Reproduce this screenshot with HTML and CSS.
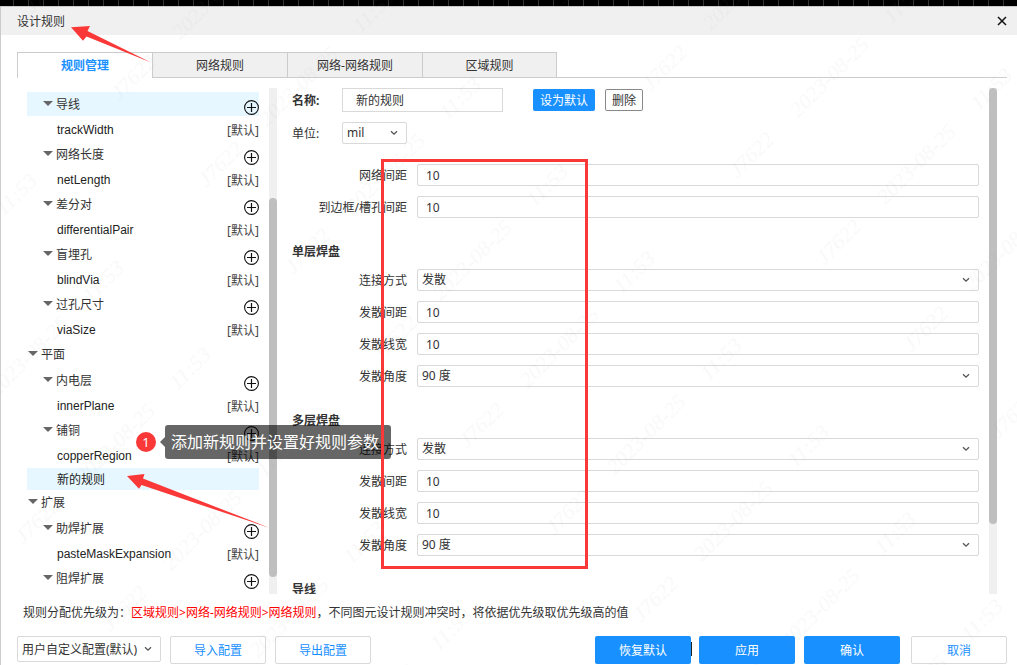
FILE: index.html
```html
<!DOCTYPE html>
<html lang="zh-CN">
<head>
<meta charset="utf-8">
<title>设计规则</title>
<link rel="stylesheet" href="styles.css">
</head>
<body>
<div class="canvas-strip"></div>
<main class="dialog">
  <header class="titlebar">
    <h1 class="title">设计规则</h1>
    <button class="close" type="button" aria-label="关闭"><svg width="10" height="10" viewBox="0 0 10 10"><path d="M1 1l8 8M9 1l-8 8" stroke="#111" stroke-width="1.5" fill="none"/></svg></button>
  </header>
  <nav class="tabs">
    <button class="tab active" type="button">规则管理</button>
    <button class="tab" type="button">网络规则</button>
    <button class="tab" type="button">网络-网络规则</button>
    <button class="tab" type="button">区域规则</button>
  </nav>
  <svg class="defs" width="0" height="0" aria-hidden="true">
    <symbol id="plus" viewBox="0 0 15 15"><circle cx="7.5" cy="7.5" r="6.9" fill="none" stroke="#111" stroke-width="1.1"/><path d="M7.500 3v9M3 7.500h9" stroke="#111" stroke-width="1.2"/></symbol>
  </svg>
  <div class="body">
    <ul class="tree">
      <li class="node group selected"><span class="name">导线</span><button class="add" type="button" aria-label="添加"><svg><use href="#plus"/></svg></button></li>
      <li class="node leaf"><span class="name">trackWidth</span><span class="default">[默认]</span></li>
      <li class="node group"><span class="name">网络长度</span><button class="add" type="button" aria-label="添加"><svg><use href="#plus"/></svg></button></li>
      <li class="node leaf"><span class="name">netLength</span><span class="default">[默认]</span></li>
      <li class="node group"><span class="name">差分对</span><button class="add" type="button" aria-label="添加"><svg><use href="#plus"/></svg></button></li>
      <li class="node leaf"><span class="name">differentialPair</span><span class="default">[默认]</span></li>
      <li class="node group"><span class="name">盲埋孔</span><button class="add" type="button" aria-label="添加"><svg><use href="#plus"/></svg></button></li>
      <li class="node leaf"><span class="name">blindVia</span><span class="default">[默认]</span></li>
      <li class="node group"><span class="name">过孔尺寸</span><button class="add" type="button" aria-label="添加"><svg><use href="#plus"/></svg></button></li>
      <li class="node leaf"><span class="name">viaSize</span><span class="default">[默认]</span></li>
      <li class="node root"><span class="name">平面</span></li>
      <li class="node group"><span class="name">内电层</span><button class="add" type="button" aria-label="添加"><svg><use href="#plus"/></svg></button></li>
      <li class="node leaf"><span class="name">innerPlane</span><span class="default">[默认]</span></li>
      <li class="node group"><span class="name">铺铜</span><button class="add" type="button" aria-label="添加"><svg><use href="#plus"/></svg></button></li>
      <li class="node leaf"><span class="name">copperRegion</span><span class="default">[默认]</span></li>
      <li class="node leaf custom selected"><span class="name">新的规则</span></li>
      <li class="node root"><span class="name">扩展</span></li>
      <li class="node group"><span class="name">助焊扩展</span><button class="add" type="button" aria-label="添加"><svg><use href="#plus"/></svg></button></li>
      <li class="node leaf"><span class="name">pasteMaskExpansion</span><span class="default">[默认]</span></li>
      <li class="node group"><span class="name">阻焊扩展</span><button class="add" type="button" aria-label="添加"><svg><use href="#plus"/></svg></button></li>
    </ul>
    <div class="scrollbar tree-scroll"><div class="thumb"></div></div>
    <form class="form">
      <div class="row">
        <label class="key strong" for="name">名称:</label>
        <input class="field name-field" id="name" value="新的规则">
        <button class="small primary" type="button">设为默认</button>
        <button class="small plain" type="button">删除</button>
      </div>
      <div class="row unit-row">
        <label class="key" for="unit">单位:</label>
        <span class="select unit"><select id="unit"><option>mil</option></select><svg viewBox="0 0 8 6"><path d="M1 1.2l3 3 3-3"/></svg></span>
      </div>
      <div class="grid">
        <label for="f1">网络间距</label><input class="field" id="f1" value="10">
        <label for="f2">到边框/槽孔间距</label><input class="field" id="f2" value="10">
      </div>
      <h2 class="section">单层焊盘</h2>
      <div class="grid">
        <label for="s1">连接方式</label><span class="select"><select id="s1"><option>发散</option></select><svg viewBox="0 0 8 6"><path d="M1 1.2l3 3 3-3"/></svg></span>
        <label for="s2">发散间距</label><input class="field" id="s2" value="10">
        <label for="s3">发散线宽</label><input class="field" id="s3" value="10">
        <label for="s4">发散角度</label><span class="select"><select id="s4"><option>90 度</option></select><svg viewBox="0 0 8 6"><path d="M1 1.2l3 3 3-3"/></svg></span>
      </div>
      <h2 class="section">多层焊盘</h2>
      <div class="grid">
        <label for="m1">连接方式</label><span class="select"><select id="m1"><option>发散</option></select><svg viewBox="0 0 8 6"><path d="M1 1.2l3 3 3-3"/></svg></span>
        <label for="m2">发散间距</label><input class="field" id="m2" value="10">
        <label for="m3">发散线宽</label><input class="field" id="m3" value="10">
        <label for="m4">发散角度</label><span class="select"><select id="m4"><option>90 度</option></select><svg viewBox="0 0 8 6"><path d="M1 1.2l3 3 3-3"/></svg></span>
      </div>
      <h2 class="section">导线</h2>
    </form>
    <div class="scrollbar form-scroll"><div class="thumb"></div></div>
  </div>
  <p class="note">规则分配优先级为：<span class="order">区域规则&gt;网络-网络规则&gt;网络规则</span>，不同图元设计规则冲突时，将依据优先级取优先级高的值</p>
  <footer class="footer">
    <span class="select config"><select aria-label="配置"><option>用户自定义配置(默认)</option></select><svg viewBox="0 0 8 6"><path d="M1 1.2l3 3 3-3"/></svg></span>
    <button class="btn outline" type="button">导入配置</button>
    <button class="btn outline" type="button">导出配置</button>
    <span class="spacer"></span>
    <button class="btn primary reset" type="button">恢复默认</button>
    <button class="btn primary" type="button">应用</button>
    <button class="btn primary" type="button">确认</button>
    <button class="btn outline cancel" type="button">取消</button>
  </footer>
</main>

<div class="callout"><span class="badge">1</span><span class="tip">添加新规则并设置好规则参数</span></div>
<div class="frame"></div>
<svg class="arrow arrow-title" viewBox="0 0 82 40"><path d="M0 1.300L19 0 16.500 5 80 36.500 15.500 10.500 12 14.700z"/></svg>
<svg class="arrow arrow-rule" viewBox="0 0 144 56"><path d="M0 4L17.500 2 16 6.500 142 55.700 14.500 13 12 16.700z"/></svg>
<svg class="watermark" aria-hidden="true">
  <pattern id="wm" width="382" height="123" patternUnits="userSpaceOnUse" patternTransform="rotate(-45)">
    <text x="40" y="33">J7622</text>
    <text x="150" y="33">2023-08-25</text>
    <text x="256" y="33">11:53</text>
  </pattern>
  <rect width="100%" height="100%" fill="url(#wm)"/>
</svg>
</body>
</html>
```

FILE: styles.css
```css
* { box-sizing: border-box; }

body {
  margin: 0;
  height: 100vh;
  display: flex;
  flex-direction: column;
  overflow: hidden;
  position: relative;
  background: #fff;
  color: #333;
  font: 12px/20px "Noto Sans", "Noto Sans CJK SC", sans-serif;
}

button, input, select { font: inherit; color: inherit; margin: 0; }
button { padding: 0; border: 0; background: none; }

.canvas-strip {
  flex: none;
  height: 6px;
  background: repeating-linear-gradient(90deg, #000 0 13px, #333 13px 14px, #000 14px 15px);
}

.dialog {
  flex: 1;
  min-height: 0;
  display: flex;
  flex-direction: column;
  border-top: 1px solid #ccc;
  border-left: 1px solid #ccc;
}

.titlebar {
  flex: none;
  height: 28px;
  padding: 0 10px 0 16px;
  display: flex;
  align-items: center;
  justify-content: space-between;
  background: #f0f0f0;
}
.title { margin: 0; padding-top: 2px; font-size: 12px; font-weight: 400; }
.close { display: flex; }

.tabs {
  flex: none;
  display: flex;
  margin: 17px 10px 0 16px;
}
.tabs::after { content: ""; flex: 1; border-bottom: 1px solid #ccc; }
.tab {
  width: 135px;
  height: 26px;
  padding-top: 2px;
  border: 1px solid #ccc;
  border-right: 0;
  background: #f0f0f0;
}
.tab:last-child { border-right: 1px solid #ccc; }
.tab.active { padding-top: 1px; background: #fff; border-bottom: 0; color: #1890ff; font-weight: 700; }

.body {
  flex: 1;
  min-height: 0;
  display: flex;
  margin: 10px 20px 0 26px;
}

.tree {
  width: 232px;
  margin: 0;
  padding: 4px 0 0;
  list-style: none;
  overflow: hidden;
}
.node { display: flex; justify-content: space-between; height: 24px; line-height: 26px; }
.group, .root { align-items: flex-start; }
.group { padding-left: 16px; }
.root { height: 26px; padding-left: 1px; }
.leaf { height: 26px; line-height: 28px; padding-left: 30px; color: #222; }
.leaf .name { font-family: "Liberation Sans", "Noto Sans CJK SC", sans-serif; }
.custom { height: 22px; line-height: 24px; }
.selected { background: #e6f7ff; }
.group .name, .root .name { display: flex; align-items: center; gap: 3px; }
.group .name::before, .root .name::before {
  content: "";
  margin-bottom: 4px;
  border: 5px solid transparent;
  border-top-color: #666;
  border-bottom: 0;
}
.add { display: flex; padding-top: 8px; }
.add svg { width: 15px; height: 15px; }
.default { padding-top: 1px; color: #444; }

.scrollbar { flex: none; width: 8px; display: grid; background: #f0f0f0; }
.thumb { border-radius: 4px; background: #bfbfbf; grid-row: 2; }
.tree-scroll { margin: 0 15px 0 10px; grid-template-rows: 110fr 379fr 17fr; }
.form-scroll { margin-left: 10px; grid-template-rows: 0 436fr 70fr; }

.form { flex: 1; min-width: 0; overflow: hidden; }
.row { display: flex; align-items: center; height: 24px; }
.unit-row { height: 22px; margin: 10px 0 20px; }
.key { width: 50px; padding-top: 2px; }
.strong { font-weight: 700; }

.field {
  width: 100%;
  height: 22px;
  min-width: 0;
  padding: 0 8px;
  border: 1px solid #d9d9d9;
  border-radius: 2px;
  background: #fff;
}
.name-field { width: 161px; height: 24px; padding: 0 13px; margin-right: 30px; border-radius: 0; }

.small { height: 22px; padding: 2px 7px 0; border-radius: 2px; white-space: nowrap; line-height: 20px; }
.primary { background: #1890ff; color: #fff; }
.plain { margin-left: 10px; padding: 1px 6px 0; border: 1px solid #888; }

.grid {
  display: grid;
  grid-template-columns: 115px 1fr;
  gap: 10px;
  align-items: center;
}
.grid label { text-align: right; height: 22px; line-height: 24px; white-space: nowrap; }

.select { display: grid; align-items: center; height: 22px; }
.select > * { grid-area: 1 / 1; }
.select select {
  appearance: none;
  width: 100%;
  height: 100%;
  padding: 0 4px;
  border: 1px solid #d9d9d9;
  border-radius: 2px;
  background: #fff;
}
.select svg {
  justify-self: end;
  width: 8px;
  height: 6px;
  margin-right: 9px;
  fill: none;
  stroke: #555;
  stroke-width: 1.3;
  pointer-events: none;
}
.unit { width: 65px; }

.section { margin: 24px 0 7px; font-size: 12px; font-weight: 700; }

.note { flex: none; margin: 9px 0 13px; padding-left: 22px; }
.order { color: #f00; }

.footer {
  flex: none;
  display: flex;
  gap: 9px;
  padding: 0 10px 1px 16px;
}
.spacer { flex: 1; }
.btn { width: 96px; height: 28px; padding-top: 2px; border-radius: 2px; }
.outline { border: 1px solid #d9d9d9; background: #fff; color: #1890ff; }
.cancel { margin-left: 2px; }
.reset { position: relative; margin-right: -1px; }
.reset::after {
  content: "";
  position: absolute;
  left: 100%;
  top: 6px;
  width: 1px;
  height: 14px;
  background: #222;
}
.config { width: 144px; height: 26px; }
.config select { padding-top: 2px; }

.callout {
  position: absolute;
  left: 136px;
  top: 425px;
  display: flex;
  align-items: center;
  color: #fff;
}
.badge {
  width: 20px;
  height: 20px;
  margin-right: 4px;
  border-radius: 50%;
  background: #fa3838;
  font-size: 13px;
  text-align: center;
}
.callout::after {
  content: "";
  order: 1;
  border: 5px solid transparent;
  border-left: 0;
  border-right-color: rgba(0, 0, 0, .6);
}
.tip {
  order: 2;
  padding: 0 12px 0 6px;
  border-radius: 3px;
  background: rgba(0, 0, 0, .6);
  font-size: 16px;
  line-height: 34px;
  white-space: nowrap;
}

.frame {
  position: absolute;
  left: 381px;
  top: 159px;
  width: 207px;
  height: 410px;
  border: 3px solid #fa3838;
}
.arrow { position: absolute; fill: #fa3838; }
.arrow-title { left: 71px; top: 26px; width: 82px; height: 40px; }
.arrow-rule { left: 127px; top: 472px; width: 144px; height: 56px; }

.watermark { position: absolute; inset: 0; width: 100%; height: 100%; pointer-events: none; }
.watermark text {
  font: italic 22px "Liberation Serif", serif;
  text-anchor: middle;
  fill: #888;
  fill-opacity: .06;
}
```
